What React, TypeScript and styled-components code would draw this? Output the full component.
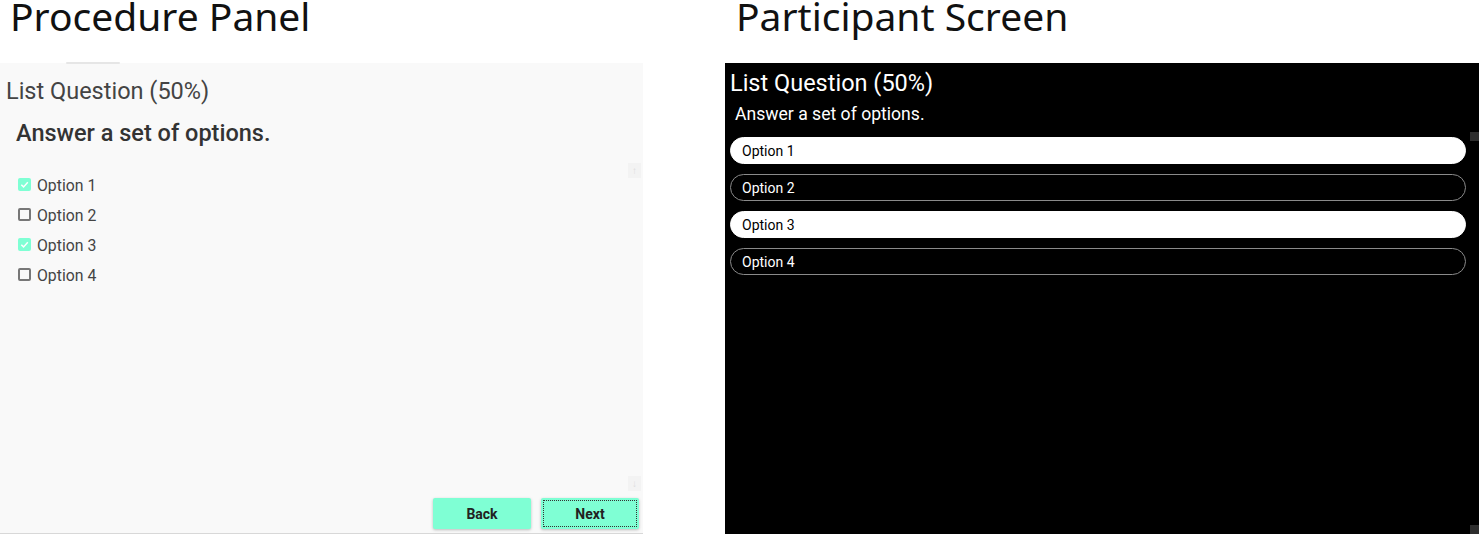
import React from "react";
import styled, { createGlobalStyle } from "styled-components";

const Global = createGlobalStyle`
  html, body { margin: 0; padding: 0; background: #ffffff; }
  body { width: 1479px; height: 534px; overflow: hidden; font-family: Roboto, "Liberation Sans", sans-serif; }
`;

const Page = styled.div`
  display: grid;
  grid-template-columns: 643px 754px;
  column-gap: 82px;
  grid-template-rows: 63px 471px;
  width: 1479px;
  height: 534px;
`;

const Caption = styled.div<{ $indent: number }>`
  font-family: "Noto Sans", "Open Sans", sans-serif;
  font-size: 39px;
  line-height: 44px;
  margin-top: -6px;
  color: #111;
  padding-left: ${(p) => p.$indent}px;
  white-space: nowrap;
`;

/* ---------- procedure panel ---------- */

const Panel = styled.div`
  position: relative;
  background: #f9f9f9;
  border-bottom: 1px solid #d8d8d8;
  box-sizing: border-box;
  display: flex;
  flex-direction: column;
  padding: 14px 4px 4px 6px;
`;

const TabShadow = styled.div`
  position: absolute;
  top: -1px;
  left: 66px;
  width: 54px;
  height: 2px;
  background: #e6e6e6;
  border-radius: 2px;
  filter: blur(0.6px);
`;

const PanelTitle = styled.div`
  font-size: 23.5px;
  line-height: 28px;
  color: #444;
`;

const PanelQuestion = styled.div`
  font-size: 23.5px;
  line-height: 28px;
  font-weight: 500;
  color: #333;
  margin: 14px 0 0 10px;
`;

const CheckList = styled.div`
  display: flex;
  flex-direction: column;
  gap: 12.3px;
  margin: 29px 0 0 12px;
`;

const CheckRow = styled.label`
  display: flex;
  align-items: center;
  gap: 6px;
  height: 18px;
  font-size: 15.8px;
  color: #444;
`;

const Box = styled.span<{ $on: boolean }>`
  width: 13px;
  height: 13px;
  box-sizing: border-box;
  border-radius: 2px;
  background: ${(p) => (p.$on ? "#7fffd4" : "transparent")};
  border: ${(p) => (p.$on ? "none" : "2px solid #777")};
  display: flex;
  align-items: center;
  justify-content: center;
  margin-top: -2px;
`;

const Spacer = styled.div`
  flex: 1;
`;

const ScrollArrow = styled.div<{ $top: number }>`
  position: absolute;
  right: 2px;
  top: ${(p) => p.$top}px;
  width: 13px;
  height: 15px;
  background: #f3f3f3;
  color: #dcdcdc;
  font-size: 10px;
  display: flex;
  align-items: center;
  justify-content: center;
`;

const ButtonBar = styled.div`
  display: flex;
  justify-content: flex-end;
  gap: 10px;
`;

const NavButton = styled.button<{ $focused?: boolean }>`
  width: 98px;
  height: 31px;
  border: none;
  border-radius: 2px;
  background: #7fffd4;
  font-family: Roboto, "Liberation Sans", sans-serif;
  font-weight: 700;
  font-size: 14px;
  color: #222;
  box-shadow: 0 1px 3px rgba(0, 0, 0, 0.25);
  outline: ${(p) => (p.$focused ? "1px dotted #333" : "none")};
  outline-offset: -3px;
  padding: 0;
`;

/* ---------- participant screen ---------- */

const Screen = styled.div`
  position: relative;
  background: #000;
  color: #fff;
  display: flex;
  flex-direction: column;
  padding: 6px 13px 0 5px;
`;

const ScreenTitle = styled.div`
  font-size: 23.5px;
  line-height: 28px;
`;

const ScreenQuestion = styled.div`
  font-size: 17.6px;
  line-height: 22px;
  margin: 6px 0 0 5px;
`;

const PillList = styled.div`
  display: flex;
  flex-direction: column;
  gap: 10px;
  margin-top: 12px;
`;

const Pill = styled.div<{ $on: boolean }>`
  height: 27px;
  box-sizing: border-box;
  border-radius: 14px;
  border: 1px solid ${(p) => (p.$on ? "#fff" : "#8a8a8a")};
  background: ${(p) => (p.$on ? "#fff" : "#000")};
  color: ${(p) => (p.$on ? "#000" : "#fff")};
  font-size: 14px;
  display: flex;
  align-items: center;
  padding-left: 11px;
`;

const ScrollNub = styled.div<{ $top: number }>`
  position: absolute;
  right: 0;
  top: ${(p) => p.$top}px;
  width: 9px;
  height: 9px;
  background: #2e2e2e;
`;

const options = [
  { label: "Option 1", on: true },
  { label: "Option 2", on: false },
  { label: "Option 3", on: true },
  { label: "Option 4", on: false },
];

const Tick = () => (
  <svg width="11" height="11" viewBox="0 0 12 12">
    <path d="M2.5 6.2 L5 8.6 L9.6 3.6" fill="none" stroke="#fff" strokeWidth="1.6" />
  </svg>
);

export default function App() {
  return (
    <>
      <Global />
      <Page>
        <Caption $indent={10}>Procedure Panel</Caption>
        <Caption $indent={11}>Participant Screen</Caption>

        <Panel>
          <TabShadow />
          <PanelTitle>List Question (50%)</PanelTitle>
          <PanelQuestion>Answer a set of options.</PanelQuestion>
          <CheckList>
            {options.map((o) => (
              <CheckRow key={o.label}>
                <Box $on={o.on}>{o.on && <Tick />}</Box>
                {o.label}
              </CheckRow>
            ))}
          </CheckList>
          <Spacer />
          <ButtonBar>
            <NavButton>Back</NavButton>
            <NavButton $focused>Next</NavButton>
          </ButtonBar>
          <ScrollArrow $top={100}>↑</ScrollArrow>
          <ScrollArrow $top={413}>↓</ScrollArrow>
        </Panel>

        <Screen>
          <ScreenTitle>List Question (50%)</ScreenTitle>
          <ScreenQuestion>Answer a set of options.</ScreenQuestion>
          <PillList>
            {options.map((o) => (
              <Pill key={o.label} $on={o.on}>
                {o.label}
              </Pill>
            ))}
          </PillList>
          <ScrollNub $top={69} />
          <ScrollNub $top={462} />
        </Screen>
      </Page>
    </>
  );
}
